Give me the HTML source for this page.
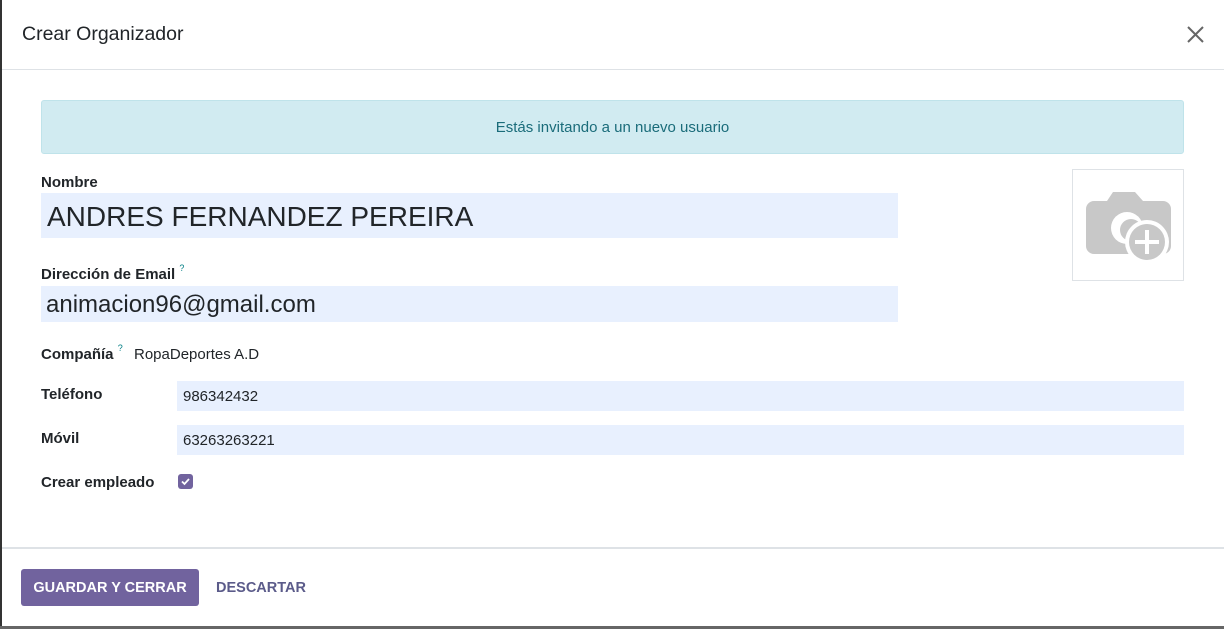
<!DOCTYPE html>
<html><head><meta charset="utf-8"><style>
*{box-sizing:border-box;margin:0;padding:0}
body{width:1224px;height:629px;background:#fff;font-family:"Liberation Sans",sans-serif;color:#212529;position:relative;overflow:hidden}
.a{position:absolute}
.lbl{font-weight:600;font-size:15px;color:#212529}
.in{background:#e8f0fe}
sup{font-size:9px;color:#017e84;font-weight:normal;vertical-align:top;position:relative;top:-3px}
</style></head><body>
<div class="a" style="left:0;top:0;width:2px;height:629px;background:#333"></div>
<div class="a" style="left:0;top:626px;width:1224px;height:3px;background:#666"></div>
<div class="a" style="left:22px;top:23px;font-size:19.5px;font-weight:500;color:#212529">Crear Organizador</div>
<svg class="a" style="left:1186px;top:25px" width="19" height="19" viewBox="0 0 19 19"><path d="M2 2L17 17M17 2L2 17" stroke="#666" stroke-width="2"/></svg>
<div class="a" style="left:2px;top:69px;width:1222px;height:1px;background:#dee2e6"></div>
<div class="a" style="left:41px;top:100px;width:1143px;height:54px;background:#d1ebf1;border:1px solid #bfe3ea;border-radius:3px;text-align:center;line-height:54px;font-size:15px;color:#1a6c7a">Estás invitando a un nuevo usuario</div>
<div class="a lbl" style="left:41px;top:174px">Nombre</div>
<div class="a in" style="left:41px;top:193px;width:857px;height:45px;font-size:28px;padding-left:6px;line-height:47px">ANDRES FERNANDEZ PEREIRA</div>
<div class="a" style="left:1072px;top:169px;width:112px;height:112px;border:1px solid #dee2e6"></div>
<svg class="a" style="left:1085px;top:190px" width="88" height="76" viewBox="0 0 88 76">
<path d="M28 2h22l8 9h20a8 8 0 0 1 8 8v37a8 8 0 0 1-8 8H9a8 8 0 0 1-8-8V19a8 8 0 0 1 8-8h13z" fill="#c8c8c8"/>
<circle cx="42" cy="38" r="16" fill="#fff"/>
<circle cx="46" cy="40" r="11" fill="#c8c8c8"/>
<circle cx="62" cy="52" r="22" fill="#fff"/>
<circle cx="62" cy="52" r="18" fill="#c8c8c8"/>
<path d="M62 40v24M50 52h24" stroke="#fff" stroke-width="4"/>
</svg>
<div class="a lbl" style="left:41px;top:266px">Dirección de Email <sup>?</sup></div>
<div class="a in" style="left:41px;top:286px;width:857px;height:36px;font-size:24px;padding-left:5px;line-height:38px">animacion96@gmail.com</div>
<div class="a lbl" style="left:41px;top:346px">Compañía <sup>?</sup></div>
<div class="a" style="left:134px;top:346px;font-size:15px">RopaDeportes A.D</div>
<div class="a lbl" style="left:41px;top:386px">Teléfono</div>
<div class="a in" style="left:177px;top:381px;width:1007px;height:30px;font-size:15px;padding-left:6px;line-height:31px">986342432</div>
<div class="a lbl" style="left:41px;top:430px">Móvil</div>
<div class="a in" style="left:177px;top:425px;width:1007px;height:30px;font-size:15px;padding-left:6px;line-height:31px">63263263221</div>
<div class="a lbl" style="left:41px;top:474px">Crear empleado</div>
<div class="a" style="left:178px;top:474px;width:15px;height:15px;background:#71639e;border-radius:3px"></div>
<svg class="a" style="left:178px;top:474px" width="15" height="15" viewBox="0 0 15 15"><path d="M4 7.5l2.5 2.5 4.5-5" stroke="#fff" stroke-width="1.8" fill="none"/></svg>
<div class="a" style="left:2px;top:547px;width:1222px;height:2px;background:#dee2e6"></div>
<div class="a" style="left:21px;top:569px;width:178px;height:37px;background:#71639e;border-radius:3px;color:#fff;font-weight:bold;font-size:14.5px;text-align:center;line-height:38px">GUARDAR Y CERRAR</div>
<div class="a" style="left:216px;top:580px;font-weight:bold;font-size:14.5px;color:#5b5b8a">DESCARTAR</div>
</body></html>
